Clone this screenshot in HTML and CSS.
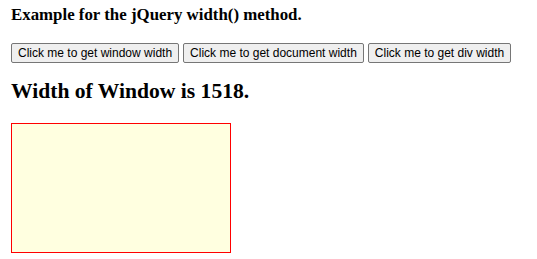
FILE: index.html
```html
<!DOCTYPE html>
<html lang="en">
  <head>
    <meta charset="UTF-8" />
    <meta name="viewport" content="width=device-width, initial-scale=1.0" />
    <title>jQuery width() method</title>
    <link rel="stylesheet" href="styles.css">
  </head>

  <body>
    <h3 class="title">Example for the jQuery width() method.</h3>
    <div class="actions">
      <button type="button" class="btn">Click me to get window width</button>
      <button type="button" class="btn">Click me to get document width</button>
      <button type="button" class="btn">Click me to get div width</button>
    </div>
    <h2 class="result">Width of Window is 1518.</h2>
    <div class="box"></div>
  </body>
</html>
```

FILE: styles.css
```css
body {
  margin: 0;
  padding: 5px 11px;
  font-family: "Liberation Serif", "Times New Roman", serif;
  color: #000;
  background: #fff;
}

.title {
  margin: 0 0 18px;
  font-size: 16.85px;
}

.actions {
  display: flex;
  gap: 4px;
}

.btn {
  flex-shrink: 0;
  white-space: nowrap;
  font-family: "Liberation Sans", Arial, sans-serif;
  font-size: 12px;
  line-height: 16px;
  padding: 1px 6px;
  color: #000;
  background: #efefef;
  border: 1px solid #767676;
  border-radius: 2px;
}

.result {
  margin: 16px 0 19px;
  font-size: 21.6px;
}

.box {
  width: 218px;
  height: 128px;
  background: #ffffe0;
  border: 1px solid red;
}
```
